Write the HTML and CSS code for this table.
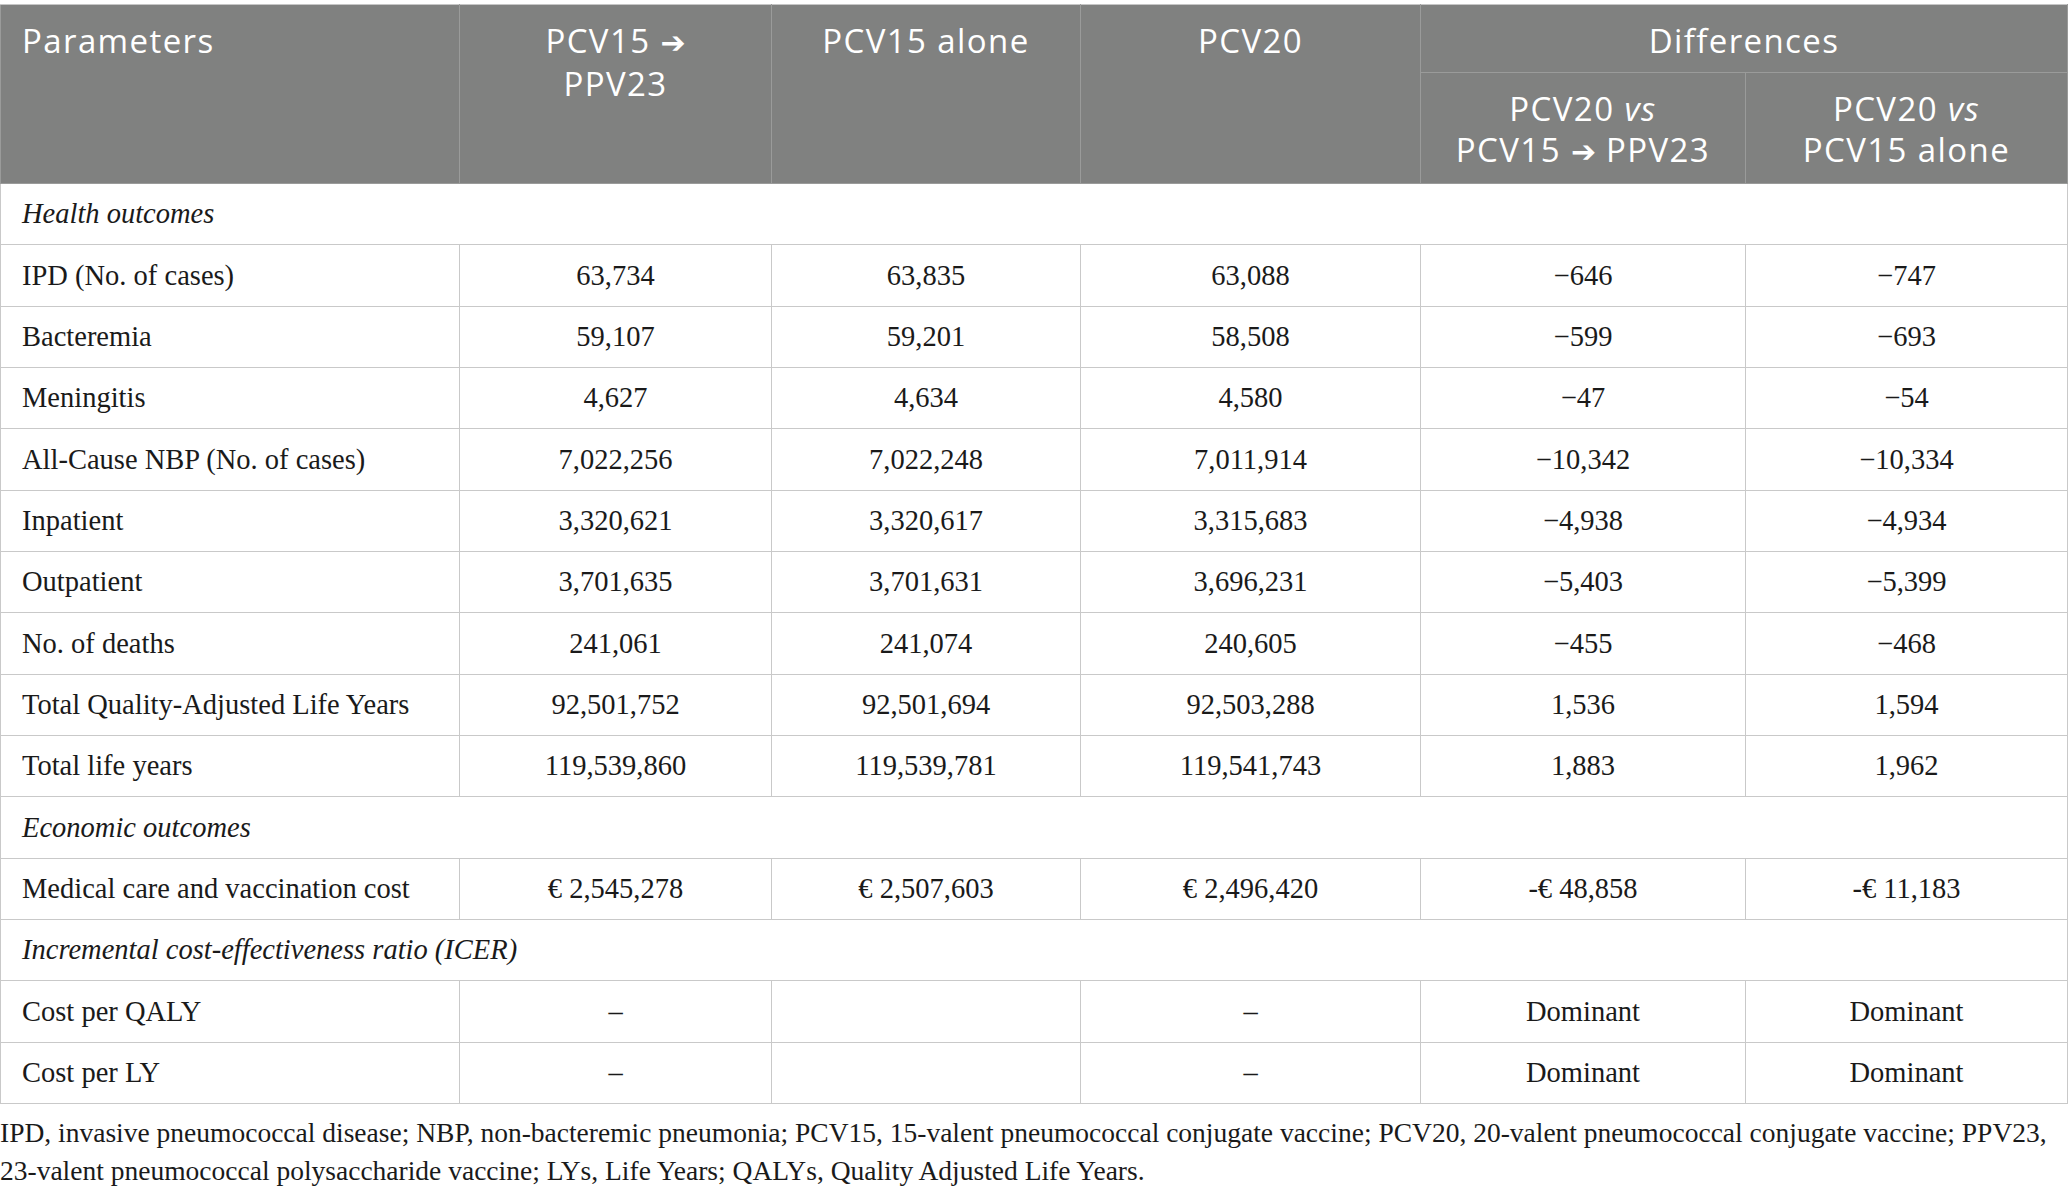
FILE: index.html
```html
<!DOCTYPE html>
<html lang="en">
<head>
<meta charset="utf-8">
<title>Cost-effectiveness results</title>
<link rel="stylesheet" href="styles.css">
</head>
<body>
<div class="page">
<table class="results">
  <colgroup>
    <col class="c1"><col class="c2"><col class="c3"><col class="c4"><col class="c5"><col class="c6">
  </colgroup>
  <thead>
    <tr class="h1">
      <th rowspan="2" class="left">Parameters</th>
      <th rowspan="2">PCV15 <span class="arr">➔</span><br>PPV23</th>
      <th rowspan="2">PCV15 alone</th>
      <th rowspan="2">PCV20</th>
      <th colspan="2">Differences</th>
    </tr>
    <tr class="h2">
      <th>PCV20 <i>vs</i><br>PCV15 <span class="arr">➔</span> PPV23</th>
      <th>PCV20 <i>vs</i><br>PCV15 alone</th>
    </tr>
  </thead>
  <tbody>
    <tr class="sec"><td colspan="6"><i>Health outcomes</i></td></tr>
    <tr><td>IPD (No. of cases)</td><td>63,734</td><td>63,835</td><td>63,088</td><td>−646</td><td>−747</td></tr>
    <tr><td>Bacteremia</td><td>59,107</td><td>59,201</td><td>58,508</td><td>−599</td><td>−693</td></tr>
    <tr><td>Meningitis</td><td>4,627</td><td>4,634</td><td>4,580</td><td>−47</td><td>−54</td></tr>
    <tr><td>All-Cause NBP (No. of cases)</td><td>7,022,256</td><td>7,022,248</td><td>7,011,914</td><td>−10,342</td><td>−10,334</td></tr>
    <tr><td>Inpatient</td><td>3,320,621</td><td>3,320,617</td><td>3,315,683</td><td>−4,938</td><td>−4,934</td></tr>
    <tr><td>Outpatient</td><td>3,701,635</td><td>3,701,631</td><td>3,696,231</td><td>−5,403</td><td>−5,399</td></tr>
    <tr><td>No. of deaths</td><td>241,061</td><td>241,074</td><td>240,605</td><td>−455</td><td>−468</td></tr>
    <tr><td>Total Quality-Adjusted Life Years</td><td>92,501,752</td><td>92,501,694</td><td>92,503,288</td><td>1,536</td><td>1,594</td></tr>
    <tr><td>Total life years</td><td>119,539,860</td><td>119,539,781</td><td>119,541,743</td><td>1,883</td><td>1,962</td></tr>
    <tr class="sec"><td colspan="6"><i>Economic outcomes</i></td></tr>
    <tr><td>Medical care and vaccination cost</td><td>€ 2,545,278</td><td>€ 2,507,603</td><td>€ 2,496,420</td><td>-€ 48,858</td><td>-€ 11,183</td></tr>
    <tr class="sec"><td colspan="6"><i>Incremental cost-effectiveness ratio (ICER)</i></td></tr>
    <tr><td>Cost per QALY</td><td>–</td><td></td><td>–</td><td>Dominant</td><td>Dominant</td></tr>
    <tr><td>Cost per LY</td><td>–</td><td></td><td>–</td><td>Dominant</td><td>Dominant</td></tr>
  </tbody>
</table>
<p class="note">IPD, invasive pneumococcal disease; NBP, non-bacteremic pneumonia; PCV15, 15-valent pneumococcal conjugate vaccine; PCV20, 20-valent pneumococcal conjugate vaccine; PPV23, 23-valent pneumococcal polysaccharide vaccine; LYs, Life Years; QALYs, Quality Adjusted Life Years.</p>
</div>
</body>
</html>
```
FILE: styles.css
```css
html, body {
  margin: 0;
  padding: 0;
  background: #ffffff;
}

.page {
  padding-top: 4px;
  width: 2068px;
}

.results {
  width: 2067px;
  border-collapse: collapse;
  table-layout: fixed;
  font-family: "Liberation Serif", "Times New Roman", serif;
  font-size: 28.5px;
  color: #1a1a1a;
}

.c1 { width: 459px; }
.c2 { width: 312px; }
.c3 { width: 309px; }
.c4 { width: 340px; }
.c5 { width: 325px; }
.c6 { width: 322px; }

.results th {
  background: #808180;
  color: #ffffff;
  font-family: "Open Sans", "Noto Sans", sans-serif;
  font-weight: 400;
  font-size: 33px;
  letter-spacing: 1.4px;
  line-height: 41px;
  text-align: center;
  vertical-align: top;
  padding: 15px 4px 0;
  border: 1px solid #9a9b9a;
  border-top-color: #c6c6c6;
}

.results th.left {
  text-align: left;
  padding-left: 21px;
}

.results th i {
  font-style: italic;
}

.results th .arr {
  font-family: "DejaVu Sans", sans-serif;
  font-size: 30px;
  letter-spacing: 0;
}

.results tr.h1 th { height: 52px; }
.results tr.h2 th { height: 95px; }

.results td {
  border: 1px solid #c9c9c9;
  height: 60.35px;
  padding: 0 10px;
  text-align: center;
  vertical-align: middle;
}

.results td:first-child {
  text-align: left;
  padding-left: 21px;
}

.results tr.sec td {
  text-align: left;
}

.note {
  margin: 10px 0 0;
  font-family: "Liberation Serif", "Times New Roman", serif;
  font-size: 27.5px;
  line-height: 37.5px;
  color: #1a1a1a;
}
```
